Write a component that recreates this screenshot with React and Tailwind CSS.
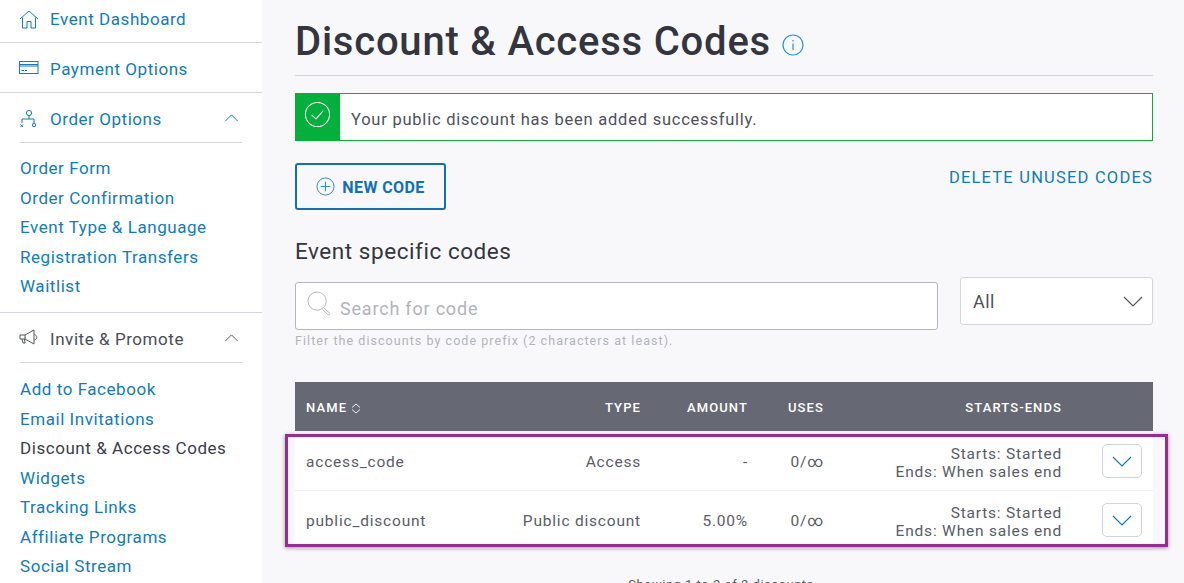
import React from "react";

const blue = "text-[#0f7cc0]";

function Chevron({ className }) {
  return (
    <svg viewBox="0 0 16 9" className={className} fill="none" stroke="currentColor" strokeWidth="1.1">
      <path d="M1 8 L8 1 L15 8" />
    </svg>
  );
}

function ChevronDown({ className }) {
  return (
    <svg viewBox="0 0 20 11" className={className} fill="none" stroke="currentColor" strokeWidth="1.2">
      <path d="M1 1 L10 10 L19 1" />
    </svg>
  );
}

function Home() {
  return (
    <svg viewBox="0 0 20 20" className="w-[20px] h-[20px] -ml-px text-[#0f7cc0]" fill="none" stroke="currentColor" strokeWidth="1">
      <path d="M1 9 L10 1 L19 9" />
      <path d="M3.5 7.5 V18 H8 V11.5 H12 V18 H16.5 V7.5" />
    </svg>
  );
}

function Card() {
  return (
    <svg viewBox="0 0 20 16" className="w-[20px] h-[16px] -ml-px text-[#0f7cc0]" fill="none" stroke="currentColor" strokeWidth="1">
      <rect x="0.5" y="1.5" width="18.5" height="12" />
      <path d="M0.5 4.5 H19 M0.5 6 H19 M2.5 10.5 H5 M6 10.5 H8" />
    </svg>
  );
}

function Org() {
  return (
    <svg viewBox="0 0 20 20" className="w-[20px] h-[20px] -ml-px text-[#0f7cc0]" fill="none" stroke="currentColor" strokeWidth="1">
      <circle cx="10" cy="5" r="2.6" />
      <path d="M10 8 V11 M3 15 V11 H15 V15" />
      <path d="M1.5 16.5 L4 19 M4 16.5 L1.5 19" />
      <circle cx="15" cy="17" r="1.7" />
    </svg>
  );
}

function Megaphone() {
  return (
    <svg viewBox="0 0 20 20" className="w-[20px] h-[20px] -ml-px text-[#54565f]" fill="none" stroke="currentColor" strokeWidth="1">
      <path d="M1 7 H6 L15 2 V16 L6 11 H1 Z" />
      <path d="M6 7 V11 M3 11 L4 15 H6 L5.5 11 M15.5 6.5 C18.5 7.5 18.5 11 15.5 12" />
    </svg>
  );
}

function SideHead({ icon, label, chevron, dark }) {
  return (
    <div className={`flex items-center h-[49px] pt-[4px] text-[17px] tracking-[0.55px] ${dark ? "text-[#4b4d57]" : blue}`}>
      <div className="w-[30px] flex items-center -mt-[3px]">{icon}</div>
      <span className="flex-1">{label}</span>
      <div className="-mt-[3px] mr-[3px] flex">{chevron}</div>
    </div>
  );
}

function SideLink({ children, active }) {
  return (
    <div className={`h-[29.5px] flex items-center text-[17px] tracking-[0.55px] ${active ? "text-[#3b3d47]" : blue}`}>{children}</div>
  );
}

function Row({ name, type, amount }) {
  return (
    <div className="flex items-center h-[59px] bg-white border-b border-[#eeeef1] text-[15.5px] tracking-[0.8px] text-[#5a5c66] pl-[11px]">
      <div className="w-[160px] pt-[3px]">{name}</div>
      <div className="w-[175px] text-right pt-[3px]">{type}</div>
      <div className="w-[107px] text-right pt-[3px]">{amount}</div>
      <div className="w-[76px] text-right pt-[3px]">0/∞</div>
      <div className="w-[238px] text-right leading-[18px] pt-[3px]">
        <div>Starts: Started</div>
        <div>Ends: When sales end</div>
      </div>
      <div className="ml-[40px] w-[40px] h-[34px] bg-white border border-[#cfd3de] rounded-[5px] flex items-center justify-center text-[#0f7cc0]">
        <ChevronDown className="w-[20px] h-[11px]" />
      </div>
    </div>
  );
}

export default function App() {
  return (
    <div className="relative w-[1184px] h-[583px] overflow-hidden flex bg-[#f8f8fa] tracking-[0.4px]" style={{ fontFamily: '"Roboto", "Liberation Sans", sans-serif' }}>
      <aside className="w-[262px] h-full bg-white shrink-0 overflow-hidden">
        <div className="h-[43px] pb-[3px] pl-[20px] border-b border-[#d3d5e2] flex items-center text-[17px] tracking-[0.55px] text-[#0f7cc0]">
          <div className="w-[30px]"><Home /></div>
          <span>Event Dashboard</span>
        </div>
        <div className="h-[50px] pt-[4px] pl-[20px] border-b border-[#d3d5e2] flex items-center text-[17px] tracking-[0.55px] text-[#0f7cc0]">
          <div className="w-[30px] -mt-[4px]"><Card /></div>
          <span>Payment Options</span>
        </div>
        <div className="h-[220px] border-b border-[#d3d5e2] px-[20px]">
          <div className="border-b border-[#d3d5e2]">
            <SideHead icon={<Org />} label="Order Options" chevron={<Chevron className="w-[15px] h-[8px] text-[#0f7cc0]" />} />
          </div>
          <div className="pt-[11px]">
            <SideLink>Order Form</SideLink>
            <SideLink>Order Confirmation</SideLink>
            <SideLink>Event Type &amp; Language</SideLink>
            <SideLink>Registration Transfers</SideLink>
            <SideLink>Waitlist</SideLink>
          </div>
        </div>
        <div className="px-[20px]">
          <div className="border-b border-[#d3d5e2]">
            <SideHead dark icon={<Megaphone />} label="Invite &amp; Promote" chevron={<Chevron className="w-[15px] h-[8px] text-[#54565f]" />} />
          </div>
          <div className="pt-[12px]">
            <SideLink>Add to Facebook</SideLink>
            <SideLink>Email Invitations</SideLink>
            <SideLink active>Discount &amp; Access Codes</SideLink>
            <SideLink>Widgets</SideLink>
            <SideLink>Tracking Links</SideLink>
            <SideLink>Affiliate Programs</SideLink>
            <SideLink>Social Stream</SideLink>
          </div>
        </div>
      </aside>

      <main className="w-[858px] ml-[33px] shrink-0">
        <div className="h-[76px] border-b border-[#d3d5de] flex items-start pt-[14px]">
          <h1 className="text-[40px] leading-[56px] font-medium text-[#33353f] tracking-[0.78px]">Discount &amp; Access Codes</h1>
          <svg viewBox="0 0 22 22" className="w-[22px] h-[22px] ml-[11px] mt-[20px] text-[#1d96dc]" fill="none" stroke="currentColor" strokeWidth="1.2">
            <circle cx="11" cy="11" r="10" />
            <path d="M11 9.5 V16 M11 6 V7.5" />
          </svg>
        </div>

        <div className="mt-[17px] h-[48px] bg-white border border-[#04b03c] flex items-center">
          <div className="w-[45px] h-[48px] shrink-0 bg-[#04b03c] flex items-center justify-center -ml-px">
            <svg viewBox="0 0 28 28" className="w-[27px] h-[27px] mb-[6px] text-white" fill="none" stroke="currentColor" strokeWidth="1.1">
              <circle cx="14" cy="14" r="12.5" />
              <path d="M8 14.5 L12.5 18.5 L20 10" />
            </svg>
          </div>
          <span className="ml-[11px] pt-[6px] text-[16.5px] tracking-[0.77px] text-[#4f515b]">Your public discount has been added successfully.</span>
        </div>

        <div className="mt-[22px] flex items-start justify-between">
          <button className="w-[151px] h-[47px] border-2 border-[#0f72b8] rounded-[3px] flex items-center justify-center gap-[7px] text-[16px] font-bold text-[#0f72b8] tracking-[0.4px]">
            <svg viewBox="0 0 20 20" className="w-[19px] h-[19px] text-[#1d86cc]" fill="none" stroke="currentColor" strokeWidth="1">
              <circle cx="10" cy="10" r="9" />
              <path d="M10 5 V15 M5 10 H15" />
            </svg>
            <span className="pt-[3px]">NEW CODE</span>
          </button>
          <span className="text-[16.5px] text-[#0f7cc0] mt-[3px] tracking-[1.2px]">DELETE UNUSED CODES</span>
        </div>

        <h2 className="mt-[26px] text-[22.5px] leading-[30px] tracking-[0.55px] text-[#33353f]">Event specific codes</h2>

        <div className="mt-[11px] flex items-start gap-[22px]">
          <div className="w-[643px] h-[48px] mt-[5px] bg-white border border-[#b4b5bb] rounded-[3px] flex items-center pl-[11px]">
            <svg viewBox="0 0 26 26" className="w-[25px] h-[25px] text-[#b4b5bb] -mt-[5px]" fill="none" stroke="currentColor" strokeWidth="1">
              <circle cx="10.5" cy="10.5" r="9.5" />
              <path d="M17.5 17.5 L24 23.5 L22 25 L16 19" />
            </svg>
            <span className="ml-[8px] mt-[4px] text-[18px] tracking-[0.8px] text-[#b2b3bb]">Search for code</span>
          </div>
          <div className="w-[193px] h-[48px] bg-white border border-[#d5d6dd] rounded-[3px] flex items-center justify-between pl-[12px] pr-[9px] text-[18px] text-[#4f515b]">
            <span>All</span>
            <ChevronDown className="w-[20px] h-[11px] text-[#54565f]" />
          </div>
        </div>
        <p className="mt-[3px] text-[12.5px] leading-[16px] text-[#b2b3bb] tracking-[1.05px]">Filter the discounts by code prefix (2 characters at least).</p>

        <div className="mt-[33px] h-[49px] bg-[#666973] flex items-center text-white text-[13px] font-medium tracking-[1.1px] pl-[11px] pr-[11px]">
          <div className="w-[160px] flex items-center gap-[4px] pt-[3px]">
            NAME
            <svg viewBox="0 0 10 11" className="w-[10px] h-[11px]" fill="none" stroke="currentColor" strokeWidth="0.9">
              <path d="M1 4.5 L5 1 L9 4.5 M1 6.5 L5 10 L9 6.5" />
            </svg>
          </div>
          <div className="w-[175px] text-right pt-[3px]">TYPE</div>
          <div className="w-[107px] text-right pt-[3px]">AMOUNT</div>
          <div className="w-[76px] text-right pt-[3px]">USES</div>
          <div className="w-[238px] text-right pt-[3px]">STARTS-ENDS</div>
        </div>
        <div className="mt-px">
          <Row name="access_code" type="Access" amount="-" />
          <Row name="public_discount" type="Public discount" amount="5.00%" />
        </div>
        <p className="mt-[25px] pr-[6px] text-center text-[13px] tracking-[0.5px] text-[#5a5c66]">Showing 1 to 2 of 2 discounts</p>
      </main>

      <div className="absolute left-[285px] top-[434px] w-[883px] h-[113px] border-[3px] border-[#9b2a93] shadow-[0_1px_4px_rgba(0,0,0,0.4)]"></div>
    </div>
  );
}
